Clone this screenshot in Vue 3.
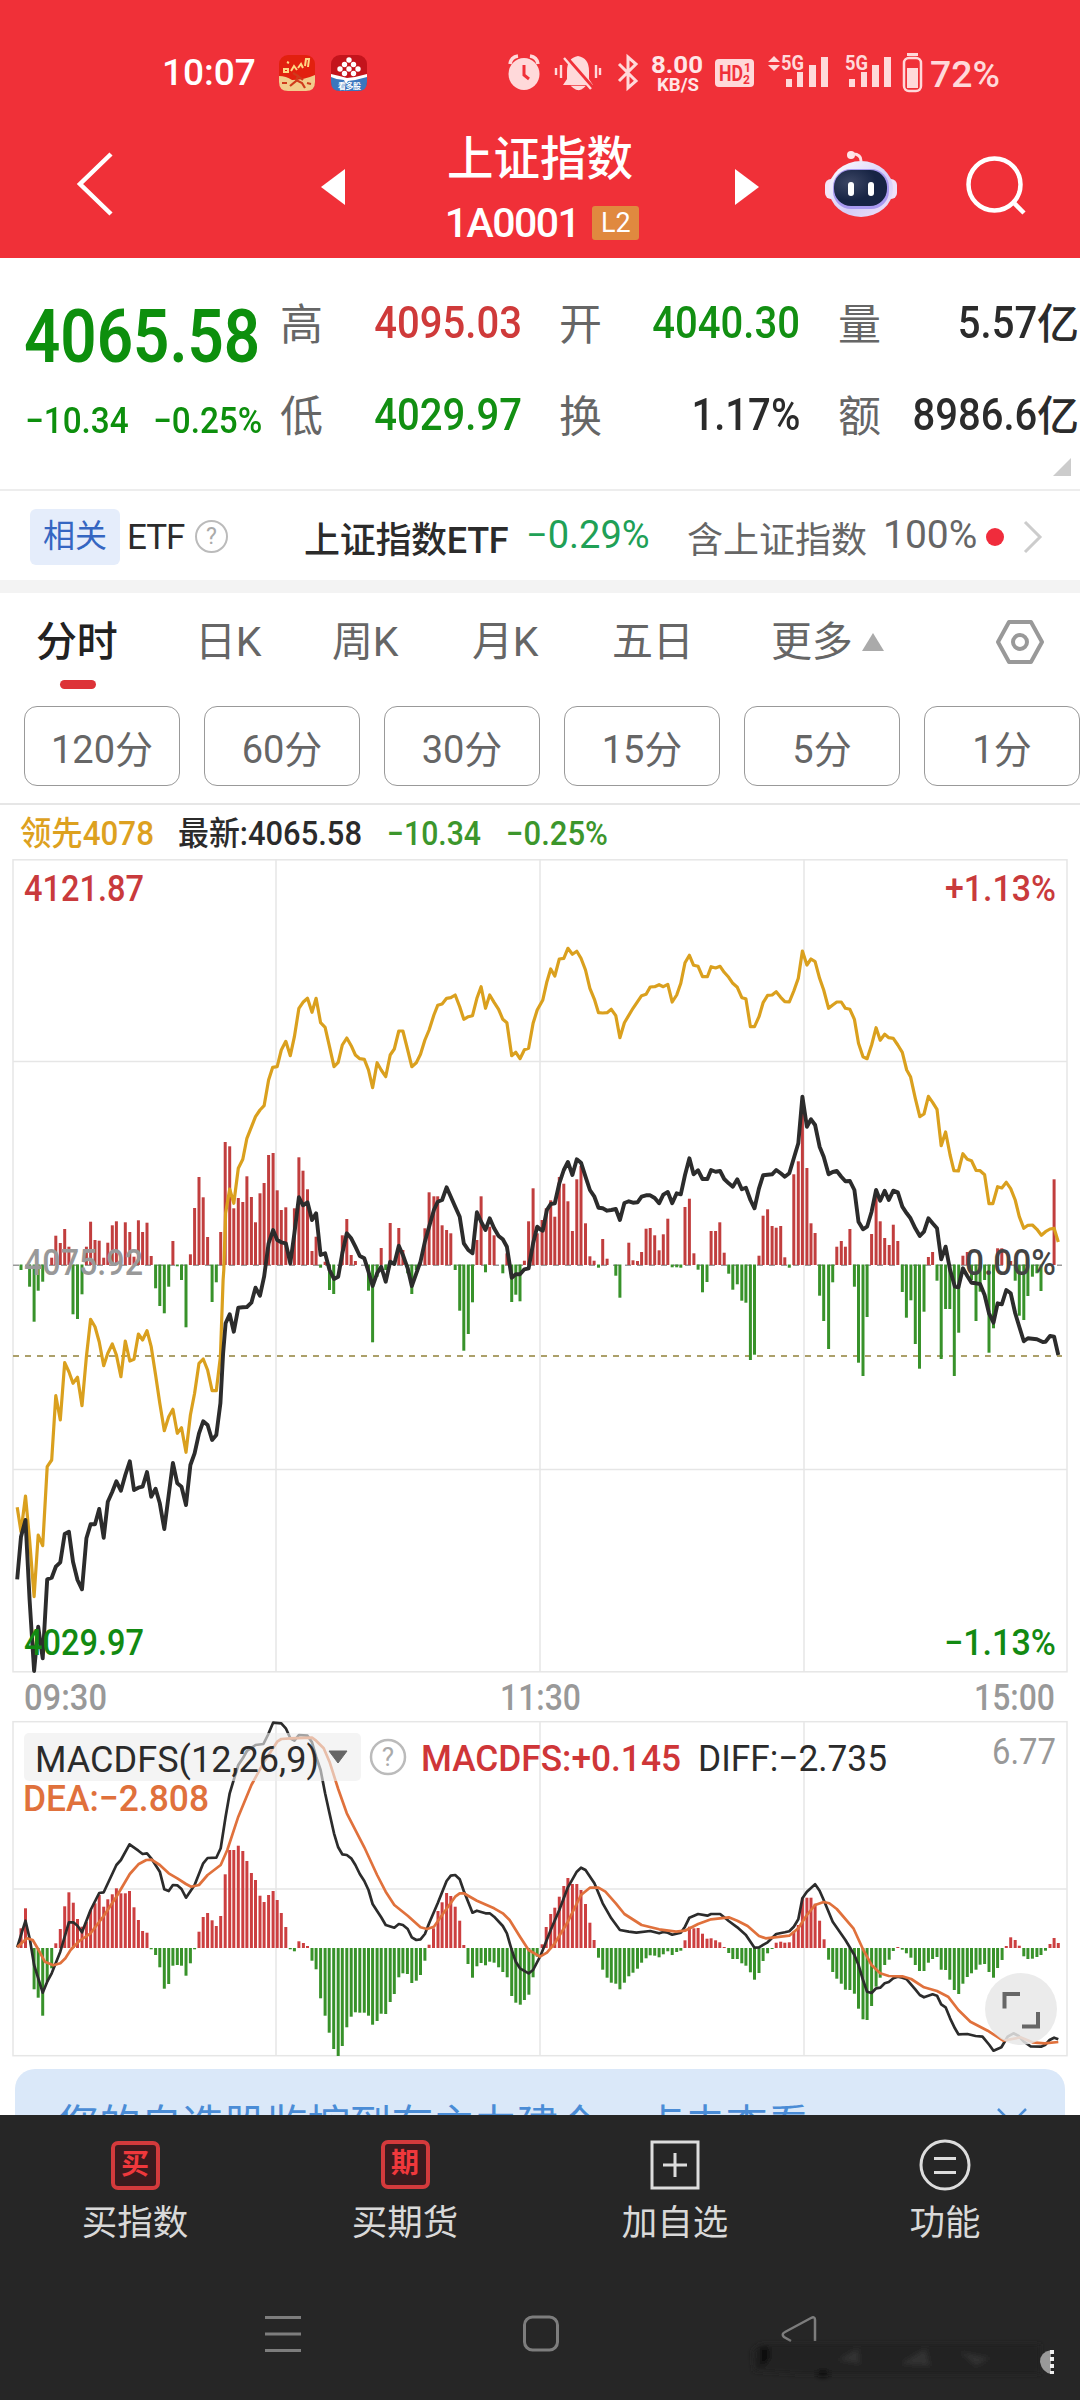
<script setup>
const KX = 2.904
const LEFT = 0
const RIGHT = 540

const nums = (s) => s.trim().split(/\s+/).map((p) => p.split(',').map(Number))
const pts = (half, y0, s) => nums(s).map(([x, y]) => [half + x / KX, y0 + y / 3])
const line = (...parts) => parts.flat().map(([x, y]) => `${x.toFixed(1)},${y.toFixed(1)}`).join(' ')

const quotes = [
  { label: '高', value: '4095.03', tone: 'up' },
  { label: '开', value: '4040.30', tone: 'down' },
  { label: '量', value: '5.57', unit: '亿', tone: 'flat' },
  { label: '低', value: '4029.97', tone: 'down' },
  { label: '换', value: '1.17%', tone: 'flat' },
  { label: '额', value: '8986.6', unit: '亿', tone: 'flat' },
]
const periods = ['120分', '60分', '30分', '15分', '5分', '1分']

const leadLine = line(
  pts(LEFT, 401, `50,742 61,815 74,708 86,840 99,1010 111,825 124,857 137,620 150,600 162,407 175,480 188,308 200,335 212,370 225,352 238,437 251,290 263,178 276,200 288,245 301,317 313,280 326,252 338,285 351,350 364,243 377,303 389,298 402,222 414,240 427,212 439,260 452,345 464,430 477,512 490,470 502,448 515,520 527,503 540,577 553,465 565,400 578,310 590,297 603,330 616,392 628,392 640,290 648,60`),
  pts(LEFT, -19, `650,1290 655,1120 667,1047 679,1090 692,985 705,958 717,895 742,830 755,810 767,797 780,720 792,682 805,680 817,630 830,604 843,647 855,590 868,505 880,487 893,475 906,517 918,475 931,548 944,562 957,620 970,680 982,667 994,615 1007,594 1020,617 1032,645 1045,656 1058,658 1070,690 1082,743 1095,668 1107,690 1120,710 1133,645 1145,627 1158,573 1170,573 1184,630 1196,680 1209,668 1221,643 1234,600 1246,570 1260,525 1271,496 1284,492 1297,475 1309,473 1322,465 1335,500 1347,538 1360,530 1372,527 1385,475 1397,440 1410,505 1422,465 1435,487 1448,508 1460,538 1472,548 1486,647 1498,637 1510,656 1523,629 1535,625 1548,550 1560,510`),
  pts(RIGHT, -19, `0,495 8,480 20,425 31,387 43,408 56,357 69,355 81,325 94,343 107,334 119,355 132,390 145,445 158,478 170,518 182,519 195,518 207,508 220,527 232,593 245,548 270,505 295,467 308,463 320,441 333,440 346,434 358,440 371,433 384,486 397,465 409,430 421,368 434,346 446,376 459,379 472,410 486,410 497,380 510,384 523,379 535,397 548,412 560,430 573,442 586,473 598,476 611,560 623,560 636,530 648,488 661,466 674,465 686,455 699,472 711,485 724,486 737,453 750,415 762,333 775,375 787,357 799,365 812,415 824,450 838,505 850,495 862,486 875,486 887,505 900,508 913,538 925,610 938,650 950,656 963,615 976,563 988,601 1001,583 1013,593 1026,595 1039,615 1052,637 1065,690 1076,710 1090,775 1103,830 1115,822 1128,769 1140,787 1153,808 1165,917 1178,876 1191,945 1202,992 1215,993 1228,941 1241,958 1253,962 1266,991 1278,992 1291,1004 1304,1091 1315,1091 1329,1040 1341,1044 1354,1027 1367,1046 1380,1080 1392,1130 1405,1165 1417,1156 1430,1155 1443,1168 1456,1186 1468,1175 1481,1167 1493,1165 1505,1206`),
)

const priceLine = line(
  pts(LEFT, 401, `50,958 61,830 74,780 86,1020 99,1233 111,1100 124,1195 137,958 150,953 162,920 175,907 188,822 200,815 212,905 225,960 238,988 251,835 263,793 276,793 288,747 301,833 313,725 326,695 338,664 351,692 364,645 377,604 389,690 402,683 414,680 427,636 439,710 452,686 464,730 477,807 490,705 502,609 515,670 527,680 540,735 553,615 565,580 578,520 590,484 603,495 616,540 628,525 640,430 648,280 655,190 667,163 679,215 692,143 705,142 717,141 730,128 742,83 755,107 767,50`),
  pts(LEFT, -19, `780,1210 793,1170 805,1200 817,1207 830,1210 843,1270 855,1180 868,1072 880,1096 893,1087 906,1140 918,1120 931,1245 944,1240 957,1290 970,1317 982,1310 994,1240 1007,1180 1020,1195 1032,1220 1045,1248 1058,1255 1070,1295 1082,1338 1095,1300 1107,1280 1120,1325 1133,1265 1145,1272 1158,1217 1170,1245 1184,1285 1196,1338 1209,1300 1221,1265 1234,1205 1246,1160 1260,1110 1271,1085 1284,1080 1297,1042 1309,1070 1322,1100 1335,1130 1347,1210 1360,1230 1372,1240 1385,1117 1397,1145 1410,1170 1422,1135 1435,1165 1448,1188 1460,1198 1472,1220 1486,1313 1498,1303 1510,1303 1523,1288 1535,1285 1548,1210 1560,1160`),
  pts(RIGHT, -19, `0,1168 8,1172 20,1110 31,1092 43,1090 56,1030 69,990 81,966 94,1005 107,958 119,968 132,1010 145,1050 158,1070 170,1103 182,1105 195,1112 207,1110 220,1107 232,1140 245,1089 258,1084 270,1088 283,1087 295,1070 308,1066 320,1066 333,1074 346,1090 358,1064 371,1056 384,1090 397,1060 409,1063 421,1005 434,955 446,1003 459,991 472,1017 486,1017 497,990 510,995 523,993 535,1017 548,1030 560,1040 573,1018 586,1048 598,1043 611,1080 623,1105 636,1045 648,1006 661,1004 674,1003 686,990 699,1000 711,1010 724,1000 737,955 750,910 762,770 775,860 787,838 799,855 812,920 824,950 838,1003 850,996 862,993 875,1010 887,1024 900,1023 913,1050 925,1145 938,1168 950,1160 963,1115 976,1050 988,1082 1001,1052 1013,1080 1026,1052 1039,1057 1052,1100 1065,1120 1076,1135 1090,1165 1103,1188 1115,1175 1128,1135 1140,1150 1153,1165 1165,1258 1178,1220 1191,1290 1205,1340 1215,1342 1228,1285 1241,1308 1253,1328 1266,1330 1278,1332 1291,1365 1304,1420 1317,1448 1329,1390 1341,1393 1354,1350 1367,1360 1380,1420 1392,1460 1405,1504 1417,1495 1443,1498 1460,1506 1468,1505 1481,1488 1493,1490 1505,1545`),
)

const upBars = [
  ...pts(LEFT, -19, `150,1253 162,1187 175,1209 188,1167 200,1220 251,1220 263,1145 276,1200 288,1202 301,1253 313,1208 326,1156 338,1144 364,1147 377,1176 389,1250 402,1141 414,1176 427,1148 439,1248 502,1203 553,1243 565,1104 578,1011 590,1072 603,1191 641,1176 654,906 667,919 679,1105 692,1074 705,1086 717,1009 730,1071 742,1147 755,1060 767,1029 780,945 793,939 805,1051 817,1110 830,1102 843,1240 855,1105 868,952 880,992 893,1048 906,1233 918,1190 944,1265 994,1186 1007,1137 1020,1245 1032,1263 1107,1224 1133,1149 1145,1268 1158,1164 1170,1230 1221,1260 1234,1165 1246,1057 1260,1069 1271,1069 1284,1156 1297,1170 1309,1180 1385,1200 1397,1069 1422,1160 1435,1186 1472,1240 1523,1262 1535,1144 1548,1045 1560,1180`),
  ...pts(RIGHT, -19, `6,1140 18,1105 31,1081 43,1130 56,1011 69,1031 81,1084 94,1173 107,1018 119,978 132,1150 145,1249 157,1262 182,1197 195,1256 258,1208 270,1261 283,1263 295,1236 308,1166 320,1164 333,1186 346,1231 358,1183 371,1136 421,1101 434,1076 447,1240 497,1173 510,1173 522,1147 535,1238 636,1247 648,1127 661,1108 674,1158 686,1163 699,1158 711,1252 737,1003 750,964 762,780 775,984 787,1150 799,1179 862,1220 875,1203 887,1220 900,1167 963,1182 976,1065 988,1144 1001,1194 1014,1215 1026,1154 1039,1203 1128,1251 1140,1236 1228,1247 1241,1236 1329,1225 1341,1225 1367,1263 1493,1018`),
]
const downBars = [
  ...pts(LEFT, 401, `61,30 86,80 99,185 111,92 124,65 212,163 225,177 238,103 452,85 464,138 477,160 490,80 515,19 527,60 540,202 616,126 628,67 931,23 957,90 969,102 1070,92 1082,247 1095,50 1120,30 1184,40 1196,102 1209,30 1322,30 1335,152 1347,272 1360,222 1372,127 1410,37 1460,40 1486,126 1498,104 1510,124`),
  ...pts(RIGHT, 401, `170,23 220,47 232,113 384,22 397,22 409,23 459,29 472,97 485,66 548,41 560,89 573,73 586,122 598,128 611,300 623,284 724,23 812,107 824,183 838,267 850,67 913,80 925,308 938,348 950,171 1052,96 1064,173 1077,121 1090,252 1102,326 1115,155 1153,62 1165,297 1178,147 1190,147 1203,348 1216,218 1253,60 1266,183 1278,95 1291,60 1304,278 1317,205 1380,62 1392,167 1405,180 1417,108 1430,50 1443,40 1455,93`),
]

const macdBars = [
  ...pts(LEFT, -11, `61,655 74,595 99,838 111,863 124,917 137,815 150,775 162,700 175,657 188,589 200,547 213,578 225,627 238,650 251,635 263,600 276,580 288,555 301,590 313,568 326,553 338,535 351,550 364,550 376,543 389,592 402,630 414,663 427,668 439,718 452,735 464,772 477,836 490,822 502,767 515,765 527,767 540,797 553,760 565,718 578,665 590,621 603,609 616,631 628,648 641,618 654,493 667,420 679,420 692,407 705,423 717,453 730,489 742,510 755,557 767,576 780,555 793,543 805,570 817,609 830,651 843,718 855,724 868,694 881,699 893,708 906,752 918,778 931,865 944,917 956,968 969,1017 982,1038 994,1008 1007,952 1020,920 1032,907 1045,908 1058,908 1070,917 1082,944 1095,933 1107,911 1120,912 1133,876 1145,852 1158,802 1170,790 1183,792 1196,819 1209,812 1221,795 1234,752 1246,704 1259,655 1272,603 1284,577 1297,549 1309,558 1322,590 1335,632 1347,705 1359,762 1372,803 1385,769 1397,759 1410,766 1422,755 1435,758 1448,772 1460,786 1473,802 1486,858 1498,878 1511,884 1523,870 1536,854 1548,802 1560,740`),
  ...pts(RIGHT, -11, `6,703 18,651 31,612 43,593 56,560 69,528 81,504 94,522 107,522 119,540 132,582 145,638 157,690 170,743 182,779 195,803 207,818 220,821 232,838 245,818 258,799 270,788 283,776 295,758 308,745 320,736 333,737 346,742 358,733 371,724 384,735 397,726 409,722 421,691 434,650 447,655 459,654 472,671 485,686 497,685 510,691 522,697 535,711 548,729 560,747 573,747 586,760 598,767 611,787 623,809 636,789 648,753 661,730 674,717 686,698 699,695 711,698 724,697 737,665 750,645 762,563 775,563 787,563 799,581 812,632 825,688 838,749 850,786 862,806 875,821 887,839 900,840 913,851 925,896 938,928 950,930 963,888 976,830 988,803 1001,765 1014,749 1026,723 1039,711 1052,719 1064,730 1077,743 1090,765 1102,783 1115,783 1128,758 1140,747 1153,741 1165,779 1178,780 1190,809 1203,840 1216,852 1228,821 1241,801 1253,790 1266,779 1278,764 1291,762 1304,786 1317,803 1329,774 1342,750 1354,708 1367,682 1380,690 1392,707 1405,739 1417,747 1430,746 1443,741 1455,735 1468,722 1481,702 1493,684 1505,699`),
]
const macdZero = 227

const diffLine = line(
  pts(LEFT, -11, `50,712 74,632 87,690 99,765 124,848 137,815 150,790 175,725 200,637 213,637 225,647 238,667 263,600 288,549 301,547 338,465 351,450 376,403 402,422 414,432 427,430 439,445 464,485 477,538 490,543 502,525 515,526 527,537 540,563 565,525 590,460 603,444 628,443 641,415 655,320 667,250 680,205 692,165 705,145 717,123 742,105 765,102 778,75 793,38 817,40 830,55 843,85 855,92 868,75 893,77 906,97 918,140 931,180 944,250 957,310 970,370 982,412 994,433 1007,435 1020,445 1032,465 1045,492 1058,513 1070,540 1082,582 1095,603 1107,622 1120,645 1145,653 1158,642 1170,645 1184,657 1196,682 1209,690 1221,688 1234,672 1246,640 1271,580 1297,513 1309,497 1322,495 1335,508 1347,543 1372,608 1385,602 1410,610 1422,610 1435,620 1460,648 1472,670 1486,720 1498,755 1510,775 1535,790 1548,780`),
  pts(RIGHT, -11, `0,740 6,725 31,660 56,600 81,532 107,485 119,473 132,480 158,520 182,580 207,625 232,660 258,665 280,668 320,663 346,670 358,666 371,668 384,674 409,668 421,650 434,623 459,612 486,617 497,612 523,612 535,622 548,633 573,652 598,675 623,713 636,712 661,697 686,672 711,667 724,664 737,650 750,628 762,565 775,545 799,523 812,542 824,570 850,635 887,690 913,735 925,765 938,810 950,845 963,849 976,835 988,833 1001,820 1013,816 1026,805 1039,800 1052,803 1065,808 1090,838 1103,855 1115,862 1140,853 1153,857 1165,883 1178,892 1191,925 1205,955 1215,973 1241,972 1265,978 1285,980 1305,1005 1317,1022 1340,1012 1358,980 1375,970 1390,978 1405,995 1425,1009 1455,1010 1468,1004 1480,990 1493,983 1505,988`),
)
const deaLine = line(
  pts(LEFT, -11, `50,712 78,685 95,690 111,718 130,755 155,766 175,760 190,745 205,720 230,693 263,670 301,618 338,560 377,492 402,463 425,450 440,449 464,465 490,490 515,505 540,522 555,530 578,525 603,495 641,465 660,420 692,320 730,225 767,155 805,95 817,87 843,85 906,83 918,92 940,115 957,155 982,237 1007,310 1058,412 1095,495 1120,545 1145,585 1184,617 1221,652 1240,657 1260,650 1284,615 1322,560 1335,550 1347,550 1385,572 1435,595 1460,610 1480,630 1510,680 1535,720`),
  pts(RIGHT, -11, `0,740 20,728 43,700 81,635 119,555 145,533 170,533 190,545 220,580 245,612 295,645 346,658 395,665 421,662 459,642 497,628 548,622 573,632 603,648 636,678 655,685 700,680 724,677 750,655 775,615 799,585 824,576 840,580 862,597 910,655 938,718 963,765 988,790 1013,798 1052,799 1078,807 1115,832 1153,843 1185,860 1215,900 1250,935 1300,962 1345,992 1395,982 1430,997 1465,1000 1505,996`),
)
</script>

<template>
  <div class="screen">
    <header class="top">
      <div class="status">
        <span class="clock">10:07</span>
        <svg class="apps" width="90" height="38" viewBox="0 0 90 38">
          <rect x="1" y="1" width="36" height="36" rx="9" fill="#e2200f" />
          <path d="M1 22 Q8 22 14 26 Q26 26 37 21 V28 Q37 37 28 37 H10 Q1 37 1 28Z" fill="#f2cc8c" />
          <path d="M6 18v-3h4v3zM13 17l3-5 3 4M20 14l3-4 2 4M27 12l1-7h3l-1 8M9 8l2 1" stroke="#ffd884" stroke-width="2" fill="none" />
          <path d="M15 19l5 3-2 5-6 5M18 26l6 3 3 5M20 22l5 4M4 29h5M29 29l4 1" stroke="#cf3a1c" stroke-width="2.2" fill="none" />
          <rect x="53" y="1" width="36" height="36" rx="9" fill="#c4141c" />
          <path d="M53 21q8 3 16 4 10-1 20-3v6q0 9-9 9H62q-9 0-9-9z" fill="#3b76bd" />
          <path d="M53 20q9 2 16 4 10-1 20-4v3q-10 3-19 4l-2 3-2-4q-7 0-13-3z" fill="#fff" />
          <g fill="#fff"><circle cx="71" cy="6" r="2.700" /><circle cx="66.500" cy="10.500" r="2.700" /><circle cx="75.500" cy="10.500" r="2.700" /><circle cx="62" cy="15" r="2.700" /><circle cx="71" cy="15" r="2.700" /><circle cx="80" cy="15" r="2.700" /><circle cx="66.500" cy="19.500" r="2.700" /><circle cx="75.500" cy="19.500" r="2.700" /></g>
          <text x="60" y="35" font-size="8" font-weight="700" fill="#fff" textLength="23">看多股</text>
        </svg>
        <svg class="sys" width="500" height="46" viewBox="505 50 500 46" fill="#ffd9da">
          <ellipse cx="524" cy="74" rx="15.5" ry="16" />
          <path d="M510 64q1-7 8-8M530 56q7 1 8 8" fill="none" stroke="#ffd9da" stroke-width="3.5" />
          <path d="M524 65v10l5 4" fill="none" stroke="#f03038" stroke-width="3" />
          <path d="M578 56q11 2 11 15v8l4 6h-30l4-6v-8q0-13 11-15z" />
          <path d="M574 87h9q-4 4-9 0zM556 68v7M561 65v13M596 65v13M600 68v7" stroke="#ffd9da" stroke-width="2.4" />
          <path d="M565 56l27 31" stroke="#f03038" stroke-width="4" />
          <path d="M564 58l27 31" stroke="#ffd9da" stroke-width="2.4" />
          <path d="M619 64l17 17-8 7V57l8 7-17 17" fill="none" stroke="#ffd9da" stroke-width="3" />
          <g fill="#ffe6e7">
            <text x="651" y="73" font-size="24" font-weight="700" textLength="52" lengthAdjust="spacingAndGlyphs">8.00</text>
            <text x="657" y="91" font-size="18" font-weight="700" textLength="42" lengthAdjust="spacingAndGlyphs">KB/S</text>
          </g>
          <rect x="715" y="59" width="39" height="28" rx="4" />
          <text x="719" y="81" font-size="22" font-weight="700" fill="#f03038" textLength="24" lengthAdjust="spacingAndGlyphs">HD</text>
          <text x="744" y="72" font-size="12" font-weight="700" fill="#f03038">1</text>
          <text x="743" y="84" font-size="12" font-weight="700" fill="#f03038">2</text>
          <path d="M768 62l6-6 6 6zM768 65h12l-6 6z" />
          <text x="781" y="70" font-size="20" font-weight="700" textLength="23" lengthAdjust="spacingAndGlyphs">5G</text>
          <path d="M786 79h6v8h-6zM797 72h6v15h-6zM809 65h7v22h-7zM821 57h7v30h-7z" />
          <text x="845" y="70" font-size="20" font-weight="700" textLength="23" lengthAdjust="spacingAndGlyphs">5G</text>
          <path d="M849 79h6v8h-6zM861 72h6v15h-6zM872 65h7v22h-7zM884 57h7v30h-7z" />
          <rect x="904" y="58" width="17" height="33" rx="5" fill="none" stroke="#ffd9da" stroke-width="2.5" />
          <path d="M907 53h11v3h-11zM907 68h11v20h-11z" />
          <text x="930" y="87" font-size="36" font-weight="500" textLength="70" lengthAdjust="spacingAndGlyphs">72%</text>
        </svg>
      </div>
      <div class="nav">
        <svg class="back" width="40" height="68" viewBox="0 0 40 68"><path d="M36 4 5 34l31 30" fill="none" stroke="#fff" stroke-width="4.5" /></svg>
        <svg class="prev" width="24" height="36" viewBox="0 0 24 36"><path d="M24 0v36L0 18z" fill="#fff" /></svg>
        <div class="title">
          <h1>上证指数</h1>
          <div class="code"><span>1A0001</span><b>L2</b></div>
        </div>
        <svg class="next" width="24" height="36" viewBox="0 0 24 36"><path d="M0 0v36l24-18z" fill="#fff" /></svg>
        <svg class="bot" width="76" height="70" viewBox="822 149 76 70">
          <defs>
            <linearGradient id="shell" x1="0" y1="0" x2="1" y2="1"><stop offset="0" stop-color="#fff" /><stop offset=".6" stop-color="#d5cdf8" /><stop offset="1" stop-color="#f3e4f7" /></linearGradient>
            <radialGradient id="visor" cx=".3" cy=".35"><stop offset="0" stop-color="#3c4664" /><stop offset="1" stop-color="#172444" /></radialGradient>
          </defs>
          <circle cx="851" cy="155" r="4" fill="#ffe6ea" /><path d="M853 154q8 0 8 7" fill="none" stroke="#ffdfe4" stroke-width="3" />
          <rect x="825" y="179" width="14" height="20" rx="6" fill="#f4e5f6" /><rect x="883" y="179" width="14" height="20" rx="6" fill="#efe0f8" />
          <ellipse cx="861" cy="189" rx="32" ry="28" fill="url(#shell)" />
          <rect x="833" y="169" width="56" height="40" rx="18" fill="#a99af0" />
          <rect x="834" y="170" width="53" height="36" rx="17" fill="url(#visor)" />
          <rect x="848" y="182" width="6" height="14" rx="3" fill="#fff" /><rect x="868" y="182" width="6" height="14" rx="3" fill="#fff" />
        </svg>
        <svg class="search" width="62" height="62" viewBox="964 155 62 62" fill="none" stroke="#fff" stroke-width="4.5"><circle cx="994.5" cy="185.5" r="26" /><path d="M1013 203l11 11" /></svg>
      </div>
    </header>

    <section class="stats">
      <div class="last">
        <div class="price"><span>4065.58</span></div>
        <div class="change"><span>−10.34</span><span>−0.25%</span></div>
      </div>
      <dl class="quotes">
        <div v-for="q in quotes" :key="q.label" class="quote">
          <dt>{{ q.label }}</dt>
          <dd :class="q.tone"><span class="din">{{ q.value }}</span><i v-if="q.unit">{{ q.unit }}</i></dd>
        </div>
      </dl>
      <span class="corner"></span>
    </section>

    <section class="etf">
      <span class="chip">相关</span>
      <span class="etf-tag">ETF</span>
      <span class="help">?</span>
      <span class="etf-name">上证指数ETF</span>
      <span class="etf-chg">−0.29%</span>
      <span class="etf-in">含上证指数</span>
      <span class="etf-pct">100%</span>
      <span class="dot"></span>
      <svg width="20" height="34" viewBox="0 0 20 34"><path d="M2 2l15 15L2 32" fill="none" stroke="#ccc" stroke-width="3" /></svg>
    </section>
    <div class="band"></div>

    <nav class="tabs">
      <span class="t0 on">分时</span><span class="t1">日K</span><span class="t2">周K</span><span class="t3">月K</span><span class="t4">五日</span><span class="t5">更多<i></i></span>
      <svg width="52" height="50" viewBox="-26 -25 52 50" fill="none" stroke="#999" stroke-width="4"><path d="M-11-20h22L22 0 11 20h-22L-22 0z" stroke-linejoin="round" /><circle r="7" /></svg>
    </nav>

    <div class="periods"><button v-for="p in periods" :key="p">{{ p }}</button></div>

    <div class="legend">
      <svg width="1080" height="54" viewBox="0 805 1080 54" font-size="33" font-weight="500">
        <text x="20" y="845" fill="#dda11f" textLength="134" lengthAdjust="spacingAndGlyphs">领先4078</text>
        <text x="178" y="845" fill="#2b2b2b" textLength="184" lengthAdjust="spacingAndGlyphs">最新:4065.58</text>
        <g fill="#3c962c"><text x="387" y="845" textLength="94" lengthAdjust="spacingAndGlyphs">−10.34</text><text x="506" y="845" textLength="102" lengthAdjust="spacingAndGlyphs">−0.25%</text></g>
      </svg>
    </div>

    <svg class="chart" width="1080" height="858" viewBox="0 0 1080 858">
      <g stroke="#e6e6e6" stroke-width="1.5" fill="none">
        <rect x="13" y="0.8" width="1054" height="812" />
        <path d="M276 0V813M540 0V813M804 0V813M13 202.500H1067M13 610.500H1067" />
      </g>
      <path d="M13 406.300H1062" stroke="#999" stroke-width="1.5" stroke-dasharray="6 6" />
      <path d="M13 497H1062" stroke="#aca06a" stroke-width="1.900" stroke-dasharray="6 6" />
      <path v-for="(b, i) in upBars" :key="'u' + i" :d="`M${b[0].toFixed(1)} 406V${b[1].toFixed(1)}`" stroke="#c13e3e" stroke-width="3" />
      <path v-for="(b, i) in downBars" :key="'d' + i" :d="`M${b[0].toFixed(1)} 405.500V${b[1].toFixed(1)}`" stroke="#38922a" stroke-width="3" />
      <g font-size="36" font-weight="500">
        <text x="24" y="416" fill="#999" textLength="119" lengthAdjust="spacingAndGlyphs">4075.92</text>
        <text x="965" y="416" fill="#444" textLength="91" lengthAdjust="spacingAndGlyphs">0.00%</text>
      </g>
      <polyline :points="leadLine" fill="none" stroke="#daa01e" stroke-width="3.200" stroke-linejoin="round" />
      <polyline :points="priceLine" fill="none" stroke="#2c2c2c" stroke-width="3.900" stroke-linejoin="round" />
      <g font-size="36" font-weight="500">
        <g fill="#c93a3c">
          <text x="24" y="42" textLength="120" lengthAdjust="spacingAndGlyphs">4121.87</text>
          <text x="945" y="42" textLength="111" lengthAdjust="spacingAndGlyphs">+1.13%</text>
        </g>
        <g fill="#128a12">
          <text x="24" y="796" textLength="120" lengthAdjust="spacingAndGlyphs">4029.97</text>
          <text x="944" y="796" textLength="112" lengthAdjust="spacingAndGlyphs">−1.13%</text>
        </g>
        <g fill="#999">
          <text x="24" y="851" textLength="83" lengthAdjust="spacingAndGlyphs">09:30</text>
          <text x="500" y="851" textLength="81" lengthAdjust="spacingAndGlyphs">11:30</text>
          <text x="974" y="851" textLength="81" lengthAdjust="spacingAndGlyphs">15:00</text>
        </g>
      </g>
    </svg>

    <svg class="macd" width="1080" height="352" viewBox="0 -4 1080 352">
      <g stroke="#e6e6e6" stroke-width="1.5" fill="none">
        <rect x="13" y="0.700" width="1054" height="334" />
        <path d="M276 1V335M540 1V335M804 1V335M13 168H1067" />
      </g>
      <path v-for="(b, i) in macdBars" :key="i" :d="`M${b[0].toFixed(1)} ${macdZero}V${b[1].toFixed(1)}`" :stroke="b[1] < macdZero ? '#cc3f40' : '#38922a'" stroke-width="3" />
      <polyline :points="diffLine" fill="none" stroke="#2c2c2c" stroke-width="2.700" stroke-linejoin="round" />
      <polyline :points="deaLine" fill="none" stroke="#e0713c" stroke-width="2.700" stroke-linejoin="round" />
      <rect x="24" y="12" width="337" height="48" rx="5" fill="#eee" fill-opacity=".62" />
      <circle cx="388" cy="36" r="17" fill="none" stroke="#bbb" stroke-width="2.500" />
      <text x="388" y="45" font-size="26" text-anchor="middle" fill="#aaa">?</text>
      <path d="M329 30h18l-9 12z" fill="#666" stroke="#666" stroke-linejoin="round" />
      <g font-size="37">
        <text x="35" y="51" fill="#2b2b2b" textLength="284" lengthAdjust="spacingAndGlyphs">MACDFS(12,26,9)</text>
        <text x="421" y="50" fill="#cf3638" font-weight="500" textLength="260" lengthAdjust="spacingAndGlyphs">MACDFS:+0.145</text>
        <text x="698" y="50" fill="#2b2b2b" textLength="189" lengthAdjust="spacingAndGlyphs">DIFF:−2.735</text>
        <text x="23" y="90" fill="#e0713c" font-weight="500" textLength="186" lengthAdjust="spacingAndGlyphs">DEA:−2.808</text>
        <text x="992" y="43" fill="#999" textLength="64" lengthAdjust="spacingAndGlyphs">6.77</text>
      </g>
      <circle cx="1021" cy="288" r="36" fill="#e8e8e8" fill-opacity=".85" />
      <path d="M1004.500 287.500V273H1020M1022 305.500h16V291" fill="none" stroke="#666" stroke-width="4" />
    </svg>

    <div class="notice-wrap">
      <div class="notice">
        <span>您的自选股监控到有主力建仓，点击查看</span>
        <svg width="30" height="30" viewBox="0 0 30 30"><path d="M1 1l28 28M29 1 1 29" stroke="#4a8cd6" stroke-width="2.500" /></svg>
      </div>
    </div>

    <footer class="bottom">
      <div class="actions">
        <div class="act"><span class="box">买</span><label>买指数</label></div>
        <div class="act"><span class="box raised">期</span><label>买期货</label></div>
        <div class="act">
          <svg width="54" height="54" viewBox="-27 -27 54 54" fill="none" stroke="#ddd" stroke-width="3"><rect x="-23" y="-23" width="46" height="46" /><path d="M-12 0h24M0-12v24" /></svg>
          <label>加自选</label>
        </div>
        <div class="act">
          <svg width="54" height="54" viewBox="-27 -27 54 54" fill="none" stroke="#ddd" stroke-width="3"><circle r="24" /><path d="M-11-6.500h22M-11 7.500h22" /></svg>
          <label>功能</label>
        </div>
      </div>
      <svg class="keys" width="1080" height="110" viewBox="0 2290 1080 110" fill="none" stroke="#7d7d7d" stroke-width="3">
        <defs><filter id="soft" x="-10%" y="-30%" width="120%" height="160%"><feGaussianBlur stdDeviation="2.500" /></filter></defs>
        <path d="M265 2317.500h36M265 2334h36M265 2350.500h36" />
        <rect x="524.500" y="2317" width="33" height="33" rx="8" />
        <path d="M815 2341v-21q0-4-4-2l-26 14q-4 2-1 5l7 4" stroke-width="2.500" />
        <g stroke="none" filter="url(#soft)">
          <path d="M752 2352q6-10 18-8h270v30H800l-46-3z" fill="#222" />
          <path d="M760 2348q10-4 10 6t-10 12zM816 2372q8-4 14 0l-3 5h-8z" fill="#0f0f0f" />
          <path d="M838 2360l20-12 2 16zM900 2364l26-16 4 18zM960 2352l30 6-14 8z" fill="#303030" />
        </g>
        <g stroke="none">
          <path d="M1040 2362q0-10 11-12v24q-9-2-11-12z" fill="#999" />
          <path d="M1050 2350h4v4h-4zM1050 2357h4v4h-4zM1050 2364h4v4h-4zM1050 2371h4v3h-4z" fill="#eee" />
        </g>
      </svg>
    </footer>
  </div>
</template>

<style>
body { margin: 0; background: #fff; }
</style>

<style scoped>
.screen { width: 1080px; height: 2400px; overflow: hidden; display: flex; flex-direction: column; background: #fff; color: #2b2b2b; font-family: Roboto, "Noto Sans CJK SC", sans-serif; }
.screen > * { flex: none; }
svg { display: block; flex: none; }
span, i, b, label { white-space: nowrap; }
i { font-style: normal; }

.top { height: 258px; box-sizing: border-box; background: #f03038; color: #fff; padding-top: 48px; }
.status { height: 50px; display: flex; align-items: center; padding-left: 162px; }
.clock { width: 116px; font-size: 37px; font-weight: 500; line-height: 50px; }
.sys { margin-left: 137px; }
.nav { display: flex; align-items: flex-start; height: 160px; }
.back { margin: 52px 0 0 75px; }
.prev { margin: 71px 0 0 206px; }
.title { width: 390px; margin-top: 34px; display: flex; flex-direction: column; align-items: center; }
h1 { margin: 0; font-size: 46.500px; font-weight: 500; line-height: 54px; }
.code { display: flex; align-items: center; gap: 13px; margin-top: 16px; height: 42px; margin-left: 4px; }
.code span { font-size: 41px; font-weight: 500; letter-spacing: -1.500px; }
.code b { width: 47px; height: 34px; border-radius: 3px; background: #e0893f; font-size: 27px; line-height: 34px; font-weight: 400; text-align: center; }
.next { margin-top: 71px; }
.bot { margin: 51px 0 0 63px; }
.search { margin: 56px 0 0 66px; }

.stats { position: relative; display: flex; height: 231px; border-bottom: 2px solid #ededed; }
.last { width: 280px; color: #0d8f0d; font-weight: 500; }
.price { margin: 41px 0 0 24px; font-size: 74px; line-height: 76px; font-weight: 600; }
.price span { display: inline-block; transform: scaleX(.86); transform-origin: left; }
.change { display: flex; margin: 23px 0 0 25px; font-size: 36px; line-height: 46px; }
.change span { width: 129px; transform: scaleX(.925); transform-origin: left; }
.quotes { margin: 0; display: grid; grid-template-columns: 242px 278px 279px; grid-template-rows: 92px 92px; column-gap: 0; padding-top: 18px; }
.quote { display: flex; align-items: center; justify-content: space-between; }
.quote:nth-child(3n + 2) { padding-left: 37px; }
.quote:nth-child(3n) { padding-left: 38px; }
dt { font-size: 43px; color: #666; font-weight: 400; margin-top: -2px; }
dd { margin: 0; display: flex; align-items: center; font-size: 45px; font-weight: 500; }
.din { display: inline-block; transform: scaleX(.89); transform-origin: right; }
dd i { font-size: 42px; font-weight: 500; margin-top: -4px; }
.up { color: #cf3a3a; }
.down { color: #128f12; }
.corner { position: absolute; right: 9px; bottom: 13px; border-left: 18px solid transparent; border-bottom: 18px solid #ccc; }

.etf { display: flex; align-items: center; height: 89px; padding: 2px 0 0 30px; box-sizing: border-box; }
.chip { width: 90px; height: 56px; border-radius: 6px; background: #e5edfb; color: #3566c2; font-size: 32px; line-height: 55px; text-align: center; }
.etf-tag { margin: 2px 0 0 7px; width: 68px; font-size: 35px; letter-spacing: -1px; }
.help { width: 29px; height: 29px; border: 2px solid #bbb; border-radius: 50%; color: #aaa; font-size: 23px; line-height: 29px; text-align: center; }
.etf-name { margin-left: 76px; width: 222px; font-size: 36px; font-weight: 500; letter-spacing: -.3px; }
.etf-chg { width: 161px; font-size: 38px; color: #20a056; margin-top: -3px; }
.etf-in { width: 196px; font-size: 36px; color: #666; }
.etf-pct { width: 103px; font-size: 39px; color: #666; margin-top: -3px; }
.dot { width: 18px; height: 18px; border-radius: 50%; background: #f02c3c; margin-right: 19px; }
.band { height: 13px; background: #f3f3f3; }

.tabs { display: flex; align-items: center; height: 98px; padding-left: 36px; font-size: 41px; color: #666; }
.tabs > span { line-height: 98px; letter-spacing: -.300px; }
.t0 { width: 159px; }
.on { color: #222; font-weight: 500; position: relative; }
.on::after { content: ""; position: absolute; left: 24px; bottom: 2px; width: 36px; height: 9px; border-radius: 5px; background: #dd3338; }
.t1 { width: 137px; }
.t2 { width: 140px; }
.t3 { width: 140px; }
.t4 { width: 159px; }
.t5 { width: 223px; display: flex; align-items: center; }
.t5 i { margin-left: 10px; border: 11px solid transparent; border-top: 0; border-bottom: 18px solid #aaa; }

.periods { display: flex; gap: 24px; padding: 15px 0 17px 24px; height: 80px; border-bottom: 2px solid #e6e6e6; }
.periods button { flex: none; box-sizing: border-box; width: 156px; height: 80px; padding: 0; border: 1.500px solid #999; border-radius: 13px; background: #fff; color: #666; font: 400 38px Roboto, "Noto Sans CJK SC", sans-serif; }
.legend { height: 54px; }
.notice-wrap { height: 46px; overflow: hidden; padding: 0 15px; }
.notice { height: 110px; border-radius: 20px; background: #dae8f9; color: #4a8cd6; display: flex; align-items: flex-start; justify-content: space-between; padding: 29px 38px 0 42px; box-sizing: border-box; }
.notice span { font-size: 41.800px; line-height: 56px; }
.notice svg { margin-top: 10px; }

.bottom { height: 285px; background: #262626; }
.actions { display: flex; height: 175px; }
.act { flex: 1; display: flex; flex-direction: column; align-items: center; padding-top: 23px; }
.act label { font-size: 35.500px; line-height: 44px; color: #d9d9d9; margin-top: 9px; }
.box { width: 41px; height: 41px; margin: 3px 2px 2px; border: 4px solid #d43a3c; border-radius: 7px; background: #3b1b1e; color: #f0383c; font-size: 28px; line-height: 39px; font-weight: 700; text-align: center; }
.raised { margin: 2px 2px 3px; }
</style>
